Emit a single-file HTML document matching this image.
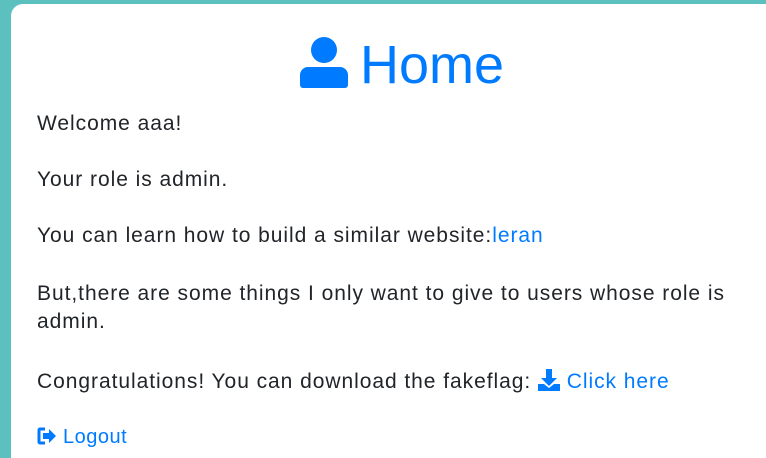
<!DOCTYPE html>
<html><head><meta charset="utf-8"><style>
html,body{margin:0;padding:0;width:766px;height:458px;overflow:hidden;background:#5bc0be;font-family:"Liberation Sans","DejaVu Sans",sans-serif;}
.card{position:absolute;left:11px;top:4px;width:755px;height:454px;background:#fff;border-radius:12px 0 0 0;}
.t{position:absolute;left:37px;font-size:21px;letter-spacing:0.95px;color:#212529;line-height:28px;white-space:nowrap;}
a{color:#007bff;text-decoration:none;}
h1{position:absolute;left:300px;top:33px;margin:0;font-weight:normal;color:#007bff;font-size:54px;line-height:64px;white-space:nowrap;}
</style></head><body>
<div class="card"></div>
<h1><svg width="48" height="53" viewBox="0 0 48 53" style="vertical-align:-6px;margin-right:12px"><circle cx="24" cy="14" r="13" fill="#007bff"/><path d="M8 31h32a8 8 0 0 1 8 8v10a3 3 0 0 1-3 3H3a3 3 0 0 1-3-3V39a8 8 0 0 1 8-8z" fill="#007bff"/></svg>Home</h1>
<div class="t" style="top:110px">Welcome aaa!</div>
<div class="t" style="top:166px">Your role is admin.</div>
<div class="t" style="top:222px">You can learn how to build a similar website:<a>leran</a></div>
<div class="t" style="top:280px">But,there are some things I only want to give to users whose role is<br>admin.</div>
<div class="t" style="top:368px">Congratulations! You can download the fakeflag: <a><svg width="22" height="22" viewBox="0 0 22 22" style="vertical-align:-3px"><path d="M8 0h6v9h5l-8 8-8-8h5z" fill="#007bff"/><path d="M0 15h6l5 4 5-4h6v7H0z" fill="#007bff"/></svg> Click here</a></div>
<div class="t" style="top:423px;font-size:20px;letter-spacing:0.5px"><a><svg width="20" height="18" viewBox="0 0 20 18" style="vertical-align:-2px"><path d="M8 2H3a1 1 0 0 0-1 1v12a1 1 0 0 0 1 1h5" stroke="#007bff" stroke-width="3" fill="none"/><path d="M6 6h6V2l7 7-7 7v-4H6z" fill="#007bff"/></svg> Logout</a></div>
</body></html>
